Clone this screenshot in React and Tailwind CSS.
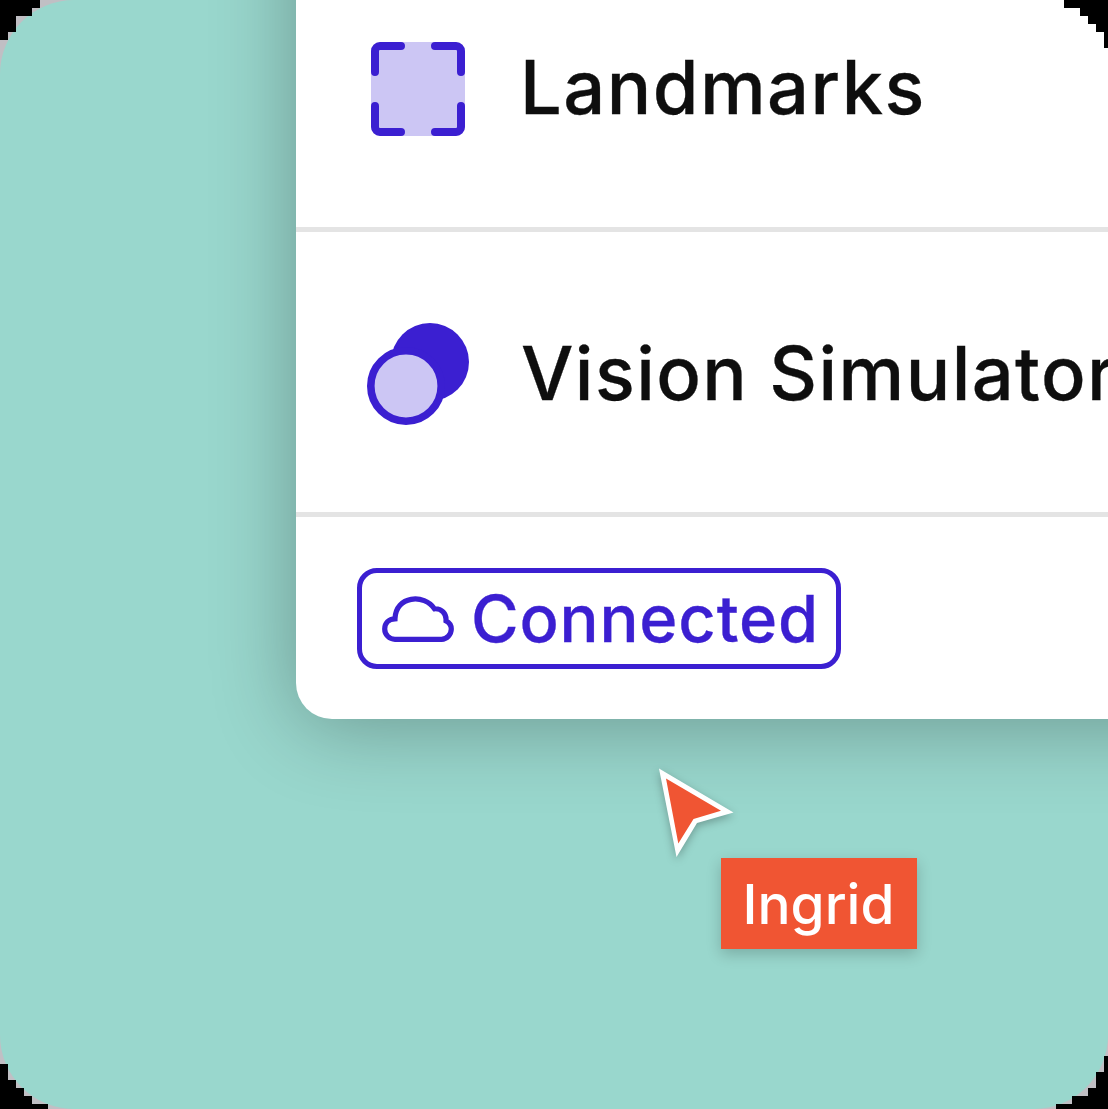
function LandmarksIcon() {
  return (
    <svg className="block h-[94px] w-[94px] shrink-0" viewBox="0 0 94 94" fill="none">
      <rect width="94" height="94" rx="9" fill="#ccc6f4" />
      <path
        d="M4 30V9A5 5 0 0 1 9 4H30 M64 4H85A5 5 0 0 1 90 9V30 M90 64V85A5 5 0 0 1 85 90H64 M30 90H9A5 5 0 0 1 4 85V64"
        stroke="#3b1fd1"
        strokeWidth="8"
        strokeLinecap="round"
      />
    </svg>
  );
}

function VisionIcon() {
  return (
    <svg className="block h-[102px] w-[102px] shrink-0" viewBox="0 0 102 102">
      <circle cx="63" cy="39" r="39" fill="#3b1fd1" />
      <circle cx="39" cy="63" r="35.2" fill="#ccc6f4" stroke="#3b1fd1" strokeWidth="7.6" />
    </svg>
  );
}

function CloudIcon() {
  return (
    <svg className="block h-[46px] w-[72px] shrink-0" viewBox="0 0 72 46" fill="none">
      <path
        d="M13 43.3H59.5A10.4 10.4 0 0 0 69.3 33C69.3 29 67 26.3 64 24.8V24.3C64.5 17.5 59.5 12.3 52.5 12.8C42.5 -2.5 13.5 -0.5 13 22.8C6.5 23 2.7 27.5 2.7 33A10.3 10.3 0 0 0 13 43.3Z"
        stroke="#3b1fd1"
        strokeWidth="5.2"
      />
    </svg>
  );
}

function Cursor() {
  return (
    <svg
      className="absolute left-[639px] top-[748px] h-[130px] w-[120px] drop-shadow-[0_3px_4px_rgba(0,0,0,0.28)]"
      viewBox="639 748 120 130"
    >
      <path d="M659 768.5L733.5 812.5L697 823L676.5 857Z" fill="#fff" />
      <path d="M666 778.5L721 810.8L693.5 819L678.3 843.5Z" fill="#f05533" />
    </svg>
  );
}

function Corners() {
  return (
    <svg className="pointer-events-none absolute inset-0 h-[1109px] w-[1108px]" viewBox="0 0 1108 1109">
      <path d="M0 0H40V8H32V16H16V32H8V40H0Z" />
      <path d="M1108 0H1064V8H1080V16H1088V24H1096V32H1104V48H1108Z" />
      <path d="M0 1109V1064H8V1080H16V1088H24V1096H32V1104H48V1109Z" />
      <path d="M1108 1109V1056H1104V1072H1096V1088H1088V1096H1072V1104H1056V1109Z" />
    </svg>
  );
}

export default function App() {
  return (
    <div className="relative h-[1109px] w-[1108px] overflow-hidden bg-[#c0bfc4] font-['Inter',sans-serif] font-medium">
      <main className="h-full overflow-hidden rounded-l-[74px] rounded-br-[74px] bg-[#99d7cd] pl-[296px]">
        <section className="-mt-[200px] h-[919px] w-[1012px] rounded-bl-[36px] bg-white pt-[200px] shadow-[0_6px_84px_rgba(0,0,0,0.3)]">
          <div className="flex h-[232px] items-start gap-[55px] border-b-[5px] border-[#e4e4e4] pl-[75px] pt-[42px]">
            <LandmarksIcon />
            <span className="whitespace-nowrap text-[74px] leading-[91px] tracking-[1.45px] text-[#0e0e0e] [-webkit-text-stroke:0.3px_#0e0e0e]">Landmarks</span>
          </div>
          <div className="flex h-[285px] items-start gap-[52px] border-b-[5px] border-[#e4e4e4] pl-[71px] pt-[91px]">
            <VisionIcon />
            <span className="whitespace-nowrap text-[74px] leading-[100px] tracking-[1.4px] text-[#0e0e0e] [-webkit-text-stroke:0.3px_#0e0e0e]">Vision Simulator</span>
          </div>
          <div className="pl-[61px] pt-[51px]">
            <div className="flex h-[101px] w-[484px] items-center gap-[17px] rounded-[20px] border-[5px] border-[#3b1fd1] pl-[20px]">
              <CloudIcon />
              <span className="whitespace-nowrap text-[65px] leading-[91px] tracking-[0.8px] text-[#3b1fd1] [-webkit-text-stroke:0.3px_#3b1fd1]">Connected</span>
            </div>
          </div>
        </section>
      </main>
      <Cursor />
      <div className="absolute left-[721px] top-[858px] flex h-[91px] w-[196px] items-center justify-center bg-[#f05533] pr-[1px] pt-[2px] text-[55px] text-white shadow-[0_5px_14px_rgba(0,0,0,0.2)]">
        Ingrid
      </div>
      <Corners />
    </div>
  );
}
